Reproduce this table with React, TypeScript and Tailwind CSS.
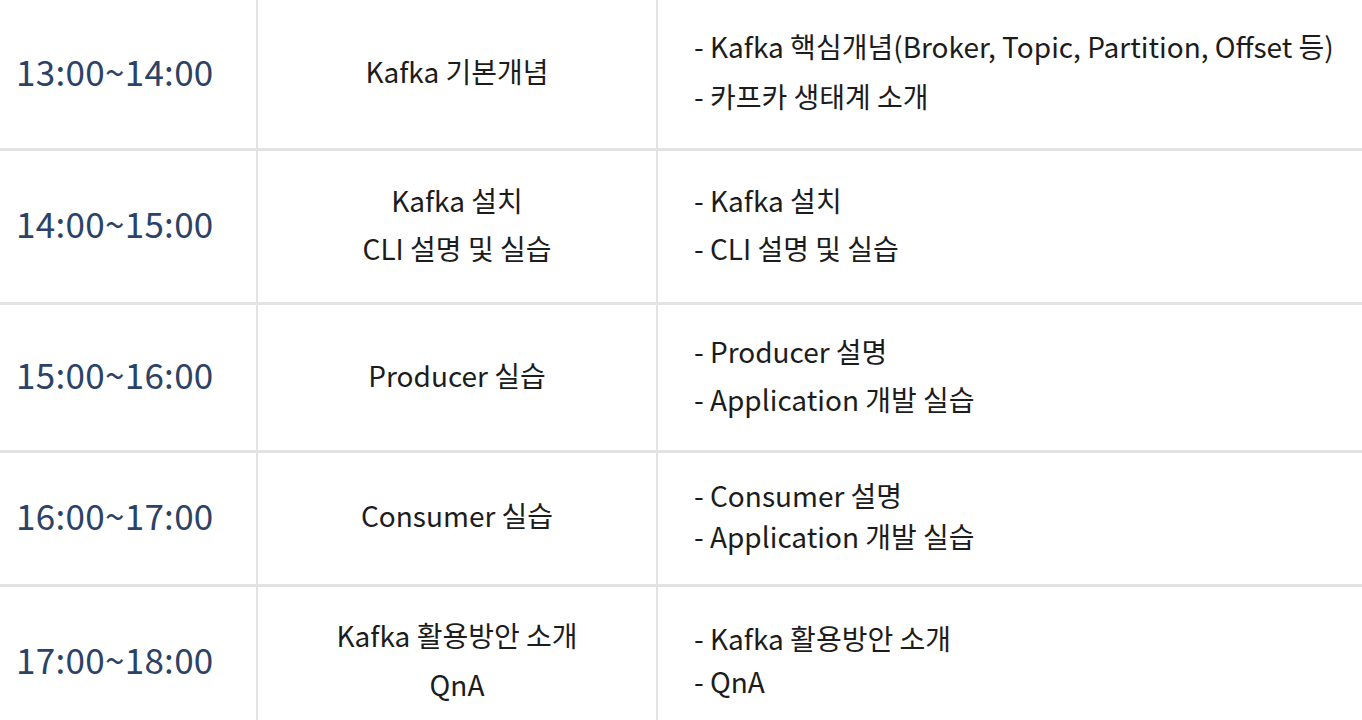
import React from 'react'

type Row = {
    time: string
    title: string[]
    details: string[]
    height: string
    titleLeading: string
    detailLeading: string
}

const rows: Row[] = [
    {
        time: '13:00~14:00',
        title: ['Kafka 기본개념'],
        details: ['- Kafka 핵심개념(Broker, Topic, Partition, Offset 등)', '- 카프카 생태계 소개'],
        height: 'h-[151px]',
        titleLeading: 'leading-[50px]',
        detailLeading: 'leading-[50px]',
    },
    {
        time: '14:00~15:00',
        title: ['Kafka 설치', 'CLI 설명 및 실습'],
        details: ['- Kafka 설치', '- CLI 설명 및 실습'],
        height: 'h-[154px]',
        titleLeading: 'leading-[48px]',
        detailLeading: 'leading-[48px]',
    },
    {
        time: '15:00~16:00',
        title: ['Producer 실습'],
        details: ['- Producer 설명', '- Application 개발 실습'],
        height: 'h-[148px]',
        titleLeading: 'leading-[48px]',
        detailLeading: 'leading-[48px]',
    },
    {
        time: '16:00~17:00',
        title: ['Consumer 실습'],
        details: ['- Consumer 설명', '- Application 개발 실습'],
        height: 'h-[134px]',
        titleLeading: 'leading-[41px]',
        detailLeading: 'leading-[41px]',
    },
    {
        time: '17:00~18:00',
        title: ['Kafka 활용방안 소개', 'QnA'],
        details: ['- Kafka 활용방안 소개', '- QnA'],
        height: 'h-[154px]',
        titleLeading: 'leading-[49px]',
        detailLeading: 'leading-[43px]',
    },
]

const font = { fontFamily: '"Noto Sans CJK KR", "Noto Sans", sans-serif' }

export default function App() {
    return (
        <div className="w-[1362px] h-[720px] overflow-hidden bg-white" style={font}>
            {rows.map((row) => (
                <div key={row.time} className={`flex shrink-0 border-b-[3px] border-[#e3e3e3] ${row.height}`}>
                    <div className="flex w-[258px] shrink-0 items-center border-r-2 border-[#e3e3e3] pb-[6px] pl-[16px]">
                        <span className="text-[35px] tracking-[0.3px] text-[#2c4266]">{row.time}</span>
                    </div>
                    <div
                        className={`flex w-[400px] shrink-0 flex-col items-center justify-center border-r-2 border-[#e3e3e3] pb-[6px] text-[28px] text-[#1c1c1c] ${row.titleLeading}`}
                    >
                        {row.title.map((t) => (
                            <div key={t}>{t}</div>
                        ))}
                    </div>
                    <div
                        className={`flex flex-1 flex-col justify-center pb-[6px] pl-[36px] text-[28px] text-[#1c1c1c] ${row.detailLeading}`}
                    >
                        {row.details.map((d) => (
                            <div key={d} className="whitespace-nowrap">
                                {d}
                            </div>
                        ))}
                    </div>
                </div>
            ))}
        </div>
    )
}
